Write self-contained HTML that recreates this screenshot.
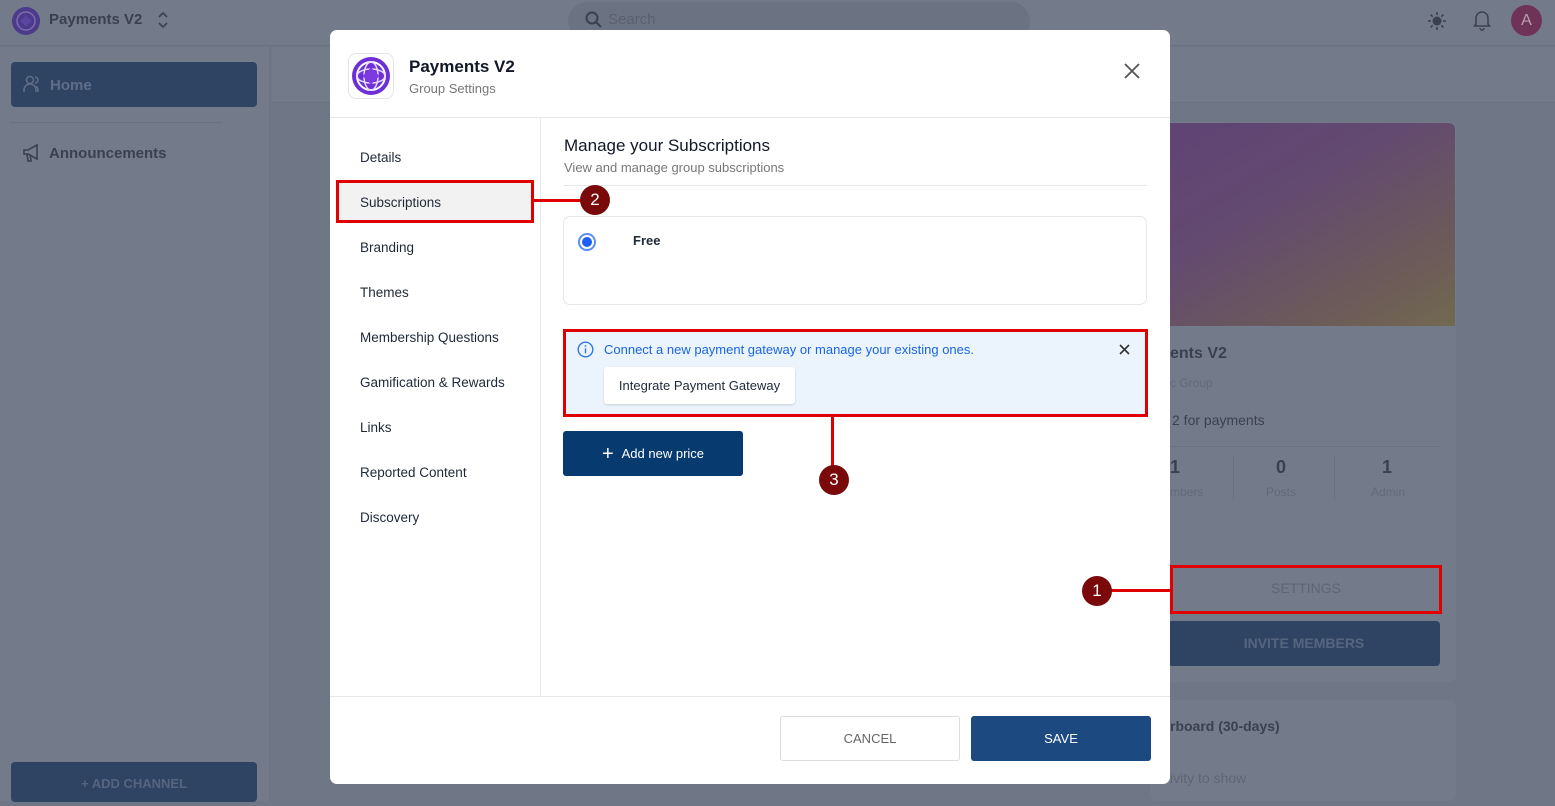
<!DOCTYPE html>
<html><head><meta charset="utf-8"><style>
*{box-sizing:border-box;margin:0;padding:0}
body{width:1555px;height:801px;overflow:hidden;background:#6f7787;font-family:"Liberation Sans",sans-serif;position:relative}
.a{position:absolute}
.nav{font-size:13.5px;color:#1f2937;left:360px}
.badge{position:absolute;width:30px;height:30px;border-radius:50%;background:#7a0a0a;color:#fff;font-size:17px;text-align:center;line-height:30px}
.red{position:absolute;border:3px solid #e00000}
.rl{position:absolute;background:#e00000}
</style></head><body>
<div class="a" style="left:0;top:0;width:1555px;height:46px;background:#737b8a;border-bottom:1px solid #6a7282"></div>
<svg class="a" style="left:11px;top:6px" width="30" height="30" viewBox="0 0 30 30"><circle cx="15" cy="15" r="14" fill="#4b3b8a"/><circle cx="15" cy="15" r="9" fill="none" stroke="#7e6cb0" stroke-width="1.5"/><rect x="11" y="11" width="8" height="8" fill="#5a45a0" transform="rotate(45 15 15)"/></svg>
<div class="a" style="left:49px;top:11px;font-size:15px;font-weight:bold;color:#3a4050">Payments V2</div>
<svg class="a" style="left:156px;top:10px" width="14" height="20" viewBox="0 0 14 20"><path d="M3 7l4-4 4 4M3 13l4 4 4-4" fill="none" stroke="#3a4050" stroke-width="1.6"/></svg>
<div class="a" style="left:568px;top:2px;width:462px;height:38px;border-radius:19px;background:#6b7383"></div>
<svg class="a" style="left:585px;top:11px" width="17" height="17" viewBox="0 0 17 17"><circle cx="7" cy="7" r="5.5" fill="none" stroke="#3a4050" stroke-width="2"/><path d="M11 11l5 5" stroke="#3a4050" stroke-width="2"/></svg>
<div class="a" style="left:608px;top:11px;font-size:15px;color:#5a6070">Search</div>
<svg class="a" style="left:1427px;top:11px" width="20" height="20" viewBox="0 0 20 20"><circle cx="10" cy="10" r="4.5" fill="#3a4050"/><path d="M10 1v3M10 16v3M1 10h3M16 10h3M3.6 3.6l2.1 2.1M14.3 14.3l2.1 2.1M3.6 16.4l2.1-2.1M14.3 5.7l2.1-2.1" stroke="#3a4050" stroke-width="1.6"/></svg>
<svg class="a" style="left:1472px;top:9px" width="20" height="22" viewBox="0 0 20 22"><path d="M4 15V9a6 6 0 0 1 12 0v6l1.5 2h-15z" fill="none" stroke="#3a4050" stroke-width="1.5"/><path d="M8 19a2 2 0 0 0 4 0" fill="none" stroke="#3a4050" stroke-width="1.5"/></svg>
<div class="a" style="left:1511px;top:5px;width:31px;height:31px;border-radius:50%;background:#6e3356;color:#b8a0b0;text-align:center;line-height:31px;font-size:16px">A</div>
<div class="a" style="left:0;top:47px;width:270px;height:754px;background:#737b8a;border-right:1px solid #6c7484"></div>
<div class="a" style="left:11px;top:62px;width:246px;height:45px;border-radius:4px;background:#2f4462"></div>
<svg class="a" style="left:22px;top:74px" width="20" height="20" viewBox="0 0 20 20"><circle cx="8" cy="6" r="3.5" fill="none" stroke="#5f6e88" stroke-width="1.5"/><path d="M2 18v-2a5 5 0 0 1 12 0v2M13 3a3 3 0 0 1 0 6M16 18v-2a4 4 0 0 0-2-3.5" fill="none" stroke="#5f6e88" stroke-width="1.5"/></svg>
<div class="a" style="left:50px;top:77px;font-size:15px;color:#5f6e88;font-weight:bold">Home</div>
<div class="a" style="left:10px;top:122px;width:212px;height:1px;background:#6a7282"></div>
<svg class="a" style="left:21px;top:142px" width="22" height="22" viewBox="0 0 22 22"><path d="M3 8h4l9-5v14l-9-5H3zM6 12l1 7h3l-1-7" fill="none" stroke="#3a4050" stroke-width="1.6"/></svg>
<div class="a" style="left:49px;top:145px;font-size:15px;color:#3a4050;font-weight:bold">Announcements</div>
<div class="a" style="left:11px;top:762px;width:246px;height:40px;border-radius:4px;background:#2f4462;color:#55657f;font-size:13px;font-weight:bold;text-align:center;line-height:44px">+ ADD CHANNEL</div>
<div class="a" style="left:272px;top:47px;width:1283px;height:56px;border-bottom:1px solid #6a7282;background:#737b8a"></div>
<div class="a" style="left:1150px;top:122px;width:306px;height:560px;border-radius:6px;background:#737b8a"></div>
<div class="a" style="left:1150px;top:123px;width:305px;height:203px;border-radius:6px 6px 0 0;background:linear-gradient(150deg,#5f4375 0%,#634a70 40%,#6d5c58 80%,#716a50 100%)"></div>
<div class="a" style="left:1170px;top:345px;font-size:16px;font-weight:bold;color:#3a4050">ents V2</div>
<div class="a" style="left:1170px;top:376px;font-size:12px;color:#636a78">c Group</div>
<div class="a" style="left:1172px;top:412px;font-size:14px;color:#3a4050">2 for payments</div>
<div class="a" style="left:1170px;top:446px;width:270px;height:1px;background:#6a7282"></div>
<div class="a" style="left:1170px;top:457px;font-size:18px;color:#3a4050;font-weight:bold">1</div>
<div class="a" style="left:1276px;top:457px;font-size:18px;color:#3a4050;font-weight:bold">0</div>
<div class="a" style="left:1382px;top:457px;font-size:18px;color:#3a4050;font-weight:bold">1</div>
<div class="a" style="left:1170px;top:485px;font-size:12px;color:#636a78">mbers</div>
<div class="a" style="left:1266px;top:485px;font-size:12px;color:#636a78">Posts</div>
<div class="a" style="left:1371px;top:485px;font-size:12px;color:#636a78">Admin</div>
<div class="a" style="left:1233px;top:455px;width:1px;height:45px;background:#6a7282"></div>
<div class="a" style="left:1334px;top:455px;width:1px;height:45px;background:#6a7282"></div>
<div class="a" style="left:1172px;top:568px;width:268px;height:44px;text-align:center;line-height:40px;font-size:14px;color:#5f6673">SETTINGS</div>
<div class="a" style="left:1168px;top:621px;width:272px;height:45px;border-radius:4px;background:#2f4462;text-align:center;line-height:45px;font-size:14px;font-weight:bold;color:#55657f">INVITE MEMBERS</div>
<div class="a" style="left:1150px;top:700px;width:306px;height:101px;border-radius:6px;background:#737b8a"></div>
<div class="a" style="left:1170px;top:718px;font-size:14px;font-weight:bold;color:#3a4050">rboard (30-days)</div>
<div class="a" style="left:1170px;top:770px;font-size:14px;color:#5f6673">ivity to show</div>

<div class="a" style="left:330px;top:30px;width:840px;height:754px;background:#fff;border-radius:7px"></div>
<div class="a" style="left:348px;top:53px;width:46px;height:46px;border-radius:8px;border:1px solid #e5e5e5;background:#fff"></div>
<svg class="a" style="left:350px;top:55px" width="42" height="42" viewBox="0 0 42 42"><circle cx="21" cy="21" r="19" fill="#6d2fd6"/><circle cx="21" cy="21" r="14" fill="none" stroke="#fff" stroke-width="2"/><ellipse cx="21" cy="21" rx="14" ry="7" fill="none" stroke="#e8dcff" stroke-width="1.5"/><ellipse cx="21" cy="21" rx="7" ry="14" fill="none" stroke="#e8dcff" stroke-width="1.5"/><rect x="15" y="15" width="12" height="12" fill="#7c3ae0" transform="rotate(45 21 21)"/></svg>
<div class="a" style="left:409px;top:57px;font-size:17px;font-weight:bold;color:#111827">Payments V2</div>
<div class="a" style="left:409px;top:81px;font-size:13px;color:#777">Group Settings</div>
<svg class="a" style="left:1124px;top:63px" width="16" height="16" viewBox="0 0 16 16"><path d="M1 1l14 14M15 1L1 15" stroke="#555" stroke-width="1.8"/></svg>
<div class="a" style="left:330px;top:117px;width:840px;height:1px;background:#e5e7eb"></div>
<div class="a" style="left:540px;top:118px;width:1px;height:578px;background:#e5e7eb"></div>
<div class="a" style="left:330px;top:696px;width:840px;height:1px;background:#e5e7eb"></div>

<div class="a" style="left:337px;top:181px;width:196px;height:41px;background:#f2f2f2"></div>
<div class="a nav" style="top:150px">Details</div>
<div class="a nav" style="top:195px">Subscriptions</div>
<div class="a nav" style="top:240px">Branding</div>
<div class="a nav" style="top:285px">Themes</div>
<div class="a nav" style="top:330px">Membership Questions</div>
<div class="a nav" style="top:375px">Gamification &amp; Rewards</div>
<div class="a nav" style="top:420px">Links</div>
<div class="a nav" style="top:465px">Reported Content</div>
<div class="a nav" style="top:510px">Discovery</div>

<div class="a" style="left:564px;top:136px;font-size:17px;color:#111827">Manage your Subscriptions</div>
<div class="a" style="left:564px;top:160px;font-size:13px;color:#777">View and manage group subscriptions</div>
<div class="a" style="left:564px;top:185px;width:583px;height:1px;background:#e5e7eb"></div>
<div class="a" style="left:563px;top:216px;width:584px;height:89px;border:1px solid #e5e7eb;border-radius:7px"></div>
<div class="a" style="left:578px;top:233px;width:18px;height:18px;border-radius:50%;border:2px solid #5b8ef5"></div>
<div class="a" style="left:582px;top:237px;width:10px;height:10px;border-radius:50%;background:#1d5ff0"></div>
<div class="a" style="left:633px;top:233px;font-size:13px;font-weight:bold;color:#1f2937">Free</div>

<div class="a" style="left:565px;top:332px;width:581px;height:83px;background:#ebf3fd;border-radius:4px"></div>
<svg class="a" style="left:577px;top:341px" width="17" height="17" viewBox="0 0 17 17"><circle cx="8.5" cy="8.5" r="7.3" fill="none" stroke="#2f78e8" stroke-width="1.4"/><rect x="7.8" y="7.3" width="1.4" height="5" fill="#2f78e8"/><circle cx="8.5" cy="5" r="0.9" fill="#2f78e8"/></svg>
<div class="a" style="left:604px;top:342px;font-size:13px;color:#1a66e0">Connect a new payment gateway or manage your existing ones.</div>
<svg class="a" style="left:1119px;top:344px" width="11" height="11" viewBox="0 0 11 11"><path d="M1 1l9 9M10 1l-9 9" stroke="#333" stroke-width="1.6"/></svg>
<div class="a" style="left:604px;top:367px;width:191px;height:37px;background:#fff;border-radius:3px;box-shadow:0 1px 2px rgba(0,0,0,.15);font-size:13px;color:#1f2937;text-align:center;line-height:37px">Integrate Payment Gateway</div>
<div class="a" style="left:563px;top:431px;width:180px;height:45px;background:#073a6e;border-radius:3px;color:#fff;font-size:13px;text-align:center;line-height:45px"><span style="font-size:20px;vertical-align:-2px;margin-right:8px">+</span>Add new price</div>

<div class="a" style="left:780px;top:716px;width:180px;height:45px;border:1px solid #ddd;border-radius:3px;font-size:13px;color:#666;text-align:center;line-height:43px">CANCEL</div>
<div class="a" style="left:971px;top:716px;width:180px;height:45px;background:#1c4a80;border-radius:3px;font-size:13px;color:#fff;text-align:center;line-height:45px">SAVE</div>

<div class="red" style="left:336px;top:180px;width:198px;height:43px"></div>
<div class="rl" style="left:533px;top:199px;width:50px;height:3px"></div>
<div class="badge" style="left:580px;top:185px">2</div>
<div class="red" style="left:563px;top:329px;width:585px;height:88px"></div>
<div class="rl" style="left:831px;top:417px;width:3px;height:50px"></div>
<div class="badge" style="left:819px;top:465px">3</div>
<div class="red" style="left:1170px;top:565px;width:272px;height:49px"></div>
<div class="rl" style="left:1108px;top:589px;width:64px;height:3px"></div>
<div class="badge" style="left:1082px;top:576px">1</div>
</body></html>
